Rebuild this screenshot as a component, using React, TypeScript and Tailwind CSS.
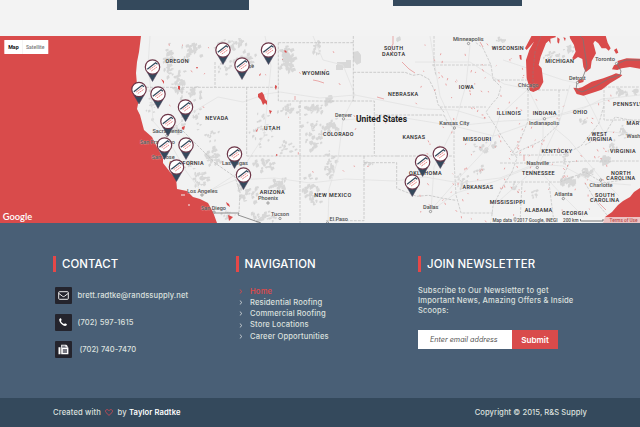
import { ReactNode } from "react";

type Label = [text: string, x: number, y: number, width: number];

const STATES: Label[] = [
  ["OREGON", 165.5, 63, 23], ["WYOMING", 302, 74.5, 27.5], ["SOUTH", 384, 50.3, 19], ["DAKOTA", 382, 55.6, 23],
  ["NEBRASKA", 388, 96.2, 30], ["NEVADA", 205.2, 120.2, 23], ["UTAH", 264, 130, 16], ["COLORADO", 323, 135.8, 30.5],
  ["KANSAS", 402.5, 138.5, 22.5], ["WISCONSIN", 491.7, 50, 32], ["MICHIGAN", 545.3, 63, 28.5], ["IOWA", 458.7, 89.3, 15],
  ["ILLINOIS", 496.7, 114.5, 24], ["INDIANA", 532.7, 114.5, 23.7], ["OHIO", 573, 113.6, 14.3], ["PENNSYLVANIA", 613, 105.7, 44],
  ["MARYLAND", 626.5, 124.5, 32], ["MISSOURI", 463, 140.8, 28], ["KENTUCKY", 541.5, 153, 30.5], ["TENNESSEE", 522, 175.4, 32.7],
  ["WEST", 591.5, 135.6, 15.5], ["VIRGINIA", 587, 140.7, 25], ["VIRGINIA", 610, 153, 25.5], ["NORTH", 611, 174.6, 19.5],
  ["CAROLINA", 606.3, 179.5, 28.7], ["SOUTH", 595, 196.6, 19.5], ["CAROLINA", 590, 201.6, 29], ["ARKANSAS", 462.5, 188.5, 30.5],
  ["MISSISSIPPI", 489.7, 204, 35], ["ALABAMA", 524.7, 211.8, 27.5], ["GEORGIA", 562, 215.4, 25.5], ["OKLAHOMA", 409, 175.3, 32.5],
  ["NEW MEXICO", 314.3, 196.5, 37], ["ARIZONA", 259.7, 193.6, 25], ["CALIFORNIA", 169.5, 165, 34],
];

const CITIES: Label[] = [
  ["Minneapolis", 453, 41.2, 30.5], ["Chicago", 518, 86.6, 20.5], ["Detroit", 569, 80, 16.5], ["Toronto", 595, 60.7, 20],
  ["Denver", 335, 116.5, 17], ["Kansas City", 439.3, 125.3, 30], ["Indianapolis", 529, 125.3, 30], ["Nashville", 526.5, 165, 22.5],
  ["Charlotte", 589.5, 186.8, 23], ["Atlanta", 554.5, 196.2, 18], ["Dallas", 423, 208.8, 15.5], ["El Paso", 329.5, 221.4, 18.5],
  ["Tucson", 271, 216, 18], ["Phoenix", 258, 200.4, 20], ["Las Vegas", 222, 165, 26], ["Los Angeles", 187, 192.5, 30.5],
  ["San Diego", 201, 210, 25], ["San Jose", 151.7, 158.6, 23], ["San Francisco", 140, 143.7, 35], ["Sacramento", 152.5, 132.5, 30],
  ["Washington", 626.5, 137.7, 30], ["Boise", 241, 67.5, 13],
];

const DOTS = [
  [468.5, 43.5], [528.5, 89], [577.5, 82.5], [616.5, 63.5], [343.5, 118.8], [454.4, 128], [544.5, 118.7], [537.3, 167.5],
  [600.7, 180], [563.3, 198.6], [430.5, 211.5], [327.5, 223], [280, 218.5], [268, 203], [202, 195], [214, 212], [167, 135.5], [252.3, 65.7],
];

const PINS = [
  [152.5, 67], [139, 89.5], [158, 94], [185.5, 107], [168, 121.5], [186, 145], [164.5, 145], [176.5, 167],
  [223, 50], [242, 65], [268.5, 50], [234.5, 154], [243.5, 175], [440.3, 154], [422.6, 162], [412.3, 182],
];

// Terrain clusters: centre x, centre y, half width, half height, patch count, patch size.
const TERRAIN = [
  [167, 60, 5, 22, 26, 4], [191, 51, 12, 11, 16, 4], [177, 80, 8, 14, 22, 4], [191, 92, 11, 9, 14, 4], [150, 106, 5, 20, 12, 3],
  [232, 43, 20, 6, 34, 3], [242, 60, 14, 12, 22, 4], [225, 68, 8, 8, 8, 4], [285, 58, 8, 14, 34, 5], [316, 47, 6, 7, 9, 4],
  [356, 59, 3, 6, 6, 4], [326, 99, 6, 5, 9, 4], [287, 108, 13, 5, 14, 4], [312, 109, 12, 6, 16, 4],
  [211, 132, 10, 10, 8, 3], [211, 157, 9, 11, 22, 4], [200, 178, 10, 10, 18, 4], [262, 130, 16, 20, 22, 3], [285, 148, 10, 12, 12, 3],
  [312, 133, 12, 20, 24, 4], [330, 125, 9, 10, 16, 4], [329, 162, 7, 17, 18, 4], [310, 190, 10, 20, 24, 4], [263, 163, 12, 8, 16, 4],
  [277, 184, 9, 7, 20, 4], [247, 193, 14, 10, 18, 4], [263, 216, 13, 6, 18, 4], [228, 215, 8, 6, 8, 3], [188, 163, 6, 6, 8, 3],
  [176, 128, 8, 8, 12, 3], [196, 119, 5, 15, 9, 3], [550, 56, 14, 7, 16, 3], [568, 49, 6, 5, 9, 3], [500, 39, 7, 3, 7, 3],
  [620, 92, 6, 4, 9, 4], [634, 91, 4, 4, 8, 3], [583, 121, 7, 4, 8, 3], [480, 148, 9, 7, 9, 4], [493, 145, 3, 4, 6, 4],
  [461, 180, 7, 9, 14, 3], [477, 169, 7, 5, 8, 3], [568, 181, 9, 5, 24, 4], [585, 172, 10, 5, 18, 4], [603, 160, 7, 6, 14, 4],
  [612, 146, 5, 8, 12, 3], [622, 132, 5, 8, 12, 3], [565, 157, 4, 7, 8, 3], [513, 187, 5, 7, 6, 3], [533, 193, 4, 5, 6, 3],
  [368, 163, 5, 2, 8, 3], [398, 38, 4, 2, 4, 4],
];

function seeded(seed: number) {
  let s = seed;
  return () => {
    s = (s * 16807) % 2147483647;
    return s / 2147483647;
  };
}

function patches() {
  const rnd = seeded(4217);
  return TERRAIN.map(([cx, cy, w, h, n, size]) => {
    let d = "";
    for (let i = 0; i < n * 1.5; i++) {
      const x = cx + (rnd() + rnd() - 1) * w;
      const y = cy + (rnd() + rnd() - 1) * h;
      const a = size * (0.3 + rnd() * 0.5);
      const b = size * (0.25 + rnd() * 0.5);
      d += `M${x.toFixed(1)} ${y.toFixed(1)}l${a.toFixed(1)} ${(-b * 0.3).toFixed(1)}l${(a * 0.3).toFixed(1)} ${b.toFixed(1)}l${(-a * 0.5).toFixed(1)} ${(b * 0.2).toFixed(1)}l${(-a * 0.4).toFixed(1)} ${(b * 0.5).toFixed(1)}l${(-a * 0.5).toFixed(1)} ${(-b * 0.6).toFixed(1)}z`;
    }
    return d;
  }).join("");
}

function lakes() {
  const rnd = seeded(991);
  let d = "";
  const areas = [[415, 38, 110, 184, 105], [515, 95, 100, 120, 55], [250, 40, 150, 170, 14], [150, 40, 70, 90, 10]];
  areas.forEach(([x0, y0, w, h, n]) => {
    for (let i = 0; i < n; i++) {
      const x = x0 + rnd() * w;
      const y = y0 + rnd() * h;
      d += `M${x.toFixed(1)} ${y.toFixed(1)}l${(rnd() * 1.6 - 0.6).toFixed(1)} ${(rnd() * 1.6).toFixed(1)}`;
    }
  });
  return d;
}

const HALO = { paintOrder: "stroke" as const };

function UsMap() {
  return (
    <svg className="block h-[187px] w-full" viewBox="0 36 640 187" fontFamily="Roboto, Arial, sans-serif">
      <rect y="36" width="640" height="187" fill="#f2f2f2" />
      <path d={patches()} fill="#d7d7d7" />
      <path d="M337 62h9v-2h5v8h-8v2h-7v-5h1zM353 52l5-1 3 4v7l-4 3-4-5z" fill="#d8d8d8" />
      <g fill="none" stroke="#e2e2e2" strokeWidth="0.8">
        <path d="M150 36l-2 30 3 25 2 30 13 15 20 35 18 24M168 135l20-20 30-18 25 5 23-8 14-2 40 6 35-3 30 6 40 8 30 1 30 9M265 36l6 30-3 30-4 40-23 35-38 24M200 195l35-15 40-2 35 5 35-4 50 2 30-4 35 6 40-5 35-14 28 2 30 16 38 3M313 36l10 24 20 5 12 30-12 24-5 40-9 30-1 34M415 62l55 0 34 22 24 5 15 30 0 20-7 28 28 30 20 20M470 45l-4 40-12 42-20 40-3 44 25-18 40-12 40-16M430 36l10 60 14 30 50-5 40-2 34-8 24-12 38-4M343 120l50-4 61 10 40 10 40-14 40-12 40-12M503 60l60 20 14 3 14 24 12 24 37 4M528 89l-28 26-10 30-30 32-30 34M570 85l-10 35-22 46-40 36M545 120l24 20 30 36 20 20"/>
      </g>
      <g fill="none" stroke="#c6c6c6" strokeWidth="0.9" strokeDasharray="2.8 1.2">
        <path d="M142 87.3H278.3M215 62V87.3M246.7 87.3V156M246.7 156H397M278.3 42.7H353.3V101H278.3zM353.3 36V42.7M353.3 72.3H405l8 3 7-1 9 5 6 12 3 13 6 8M353.3 101H374.3V115H444M374.3 115V156M300 101V223M364 156V220.7H326M364 162.7H396.7V188.3l10 4 10 4 12-1 14 3 13 2M397 156H453.5M182 87.3V130l33 33 20 14 5 15-1 20" />
        <path d="M434 36v30l2 10M432 65h59l-8-17-8-6M491 65l2 14 8 8-3 10-7 8-5 7 8 12 10 16 9 12 4 6-5 14-9 14-10 20-3 25M440 107h46M444 115l4 8 6 5v32l2 35 5 18h32M493 80h35M528 90v31l-8 20-9 14M530 90h38M559 90v34l-18 17-26 12M511 155h52l18-9 12-15 6-8 5-18M604 82v38h36M604 87h36M500 163h37l47-2h56M505 182h55l10-20M522 183l-2 40M549 183l5 40M560 182l25-10 18 11 20-3M585 183l12 20 10 12M585 145l20-11 10-17 20 4" strokeWidth="0.8" />
      </g>
      <g fill="#d94b4b">
        <path d="M0 36H141L139 52L137 62L136 73L137 85L139 95L138 104L137 109L140 115L144 130L152 137L157 147L163 158L163 163L170 172L176 178L177 189L187 191L193 197L200 199L208 203L213 212L217 223H0Z" />
        <g transform="translate(410 0) scale(.33333)">
          <path d="M365 107L345 145L350 150L372 125L358 150L348 180L350 235L357 258L360 272L370 276L388 268L400 246L395 205L386 195L392 170L400 150L408 130L416 122L422 132L421 116L437 112V107Z" />
          <path d="M479 107H587L593 128L602 145L596 152L588 145L575 145L565 130L555 122L550 130L558 160L545 183L542 205L527 217L520 200L517 177L504 171L490 181L487 174L497 155L492 135L480 115Z" />
          <path d="M490 263L505 265L516 262L545 245L580 235L606 225L618 220L637 225L630 232L600 250L575 269L555 276L520 287L500 282ZM499 249l8-12 15 1-2 8-13 4zM606 208L612 196L625 190L622 183L650 175L690 176V206L660 201L635 205L622 210ZM612 150l8-5 5 13-7 3zM328 165l6 0 1 15-5-2zM460 112l7 2-2 10zM442 112l7 5-2 14-5-4z" />
        </g>
        <path d="M640 188L634 192L630 197L623 201L618 205L612 212L605 217L603 223H640Z" />
        <path d="M258 94l4-2 2 3 1 4 2 2v4l-2-2-2 2-2-5-3-3zM269 110l3 1-2 3zM256 131l2-3-1 4zM275 85l2 1-1 4-1-2zM259 75l2-2-1 3zM284.5 50l2 1v2l-2-1zM282 59l1 1h-1zM161 79l3 2v3zM178 86l2 0v4l-2-1zM182 127l3-1-1 4-2-1zM196 67l2 0-1 2zM276 154l2 1-2 1zM226 202l3 2 1 3-3-2zM228 215l5 2-2 2-2 2z" />
      </g>
      <path d={lakes()} fill="none" stroke="#e58a8a" strokeWidth="0.75" strokeLinecap="round" />
      <path d="M393 36v8l-3 5 4 4M402 62l7 7 6 4M313 80l5 1 6 2M377 97l7 2M524 155v6M599 203l7 7M480 42l3 5M295 96v4" fill="none" stroke="#e58a8a" strokeWidth="0.7" />
      <path d="M181 195l4 0M188 205l2 0" stroke="#f2f2f2" strokeWidth="1" />
      <g fill="none" stroke="#777" strokeWidth="0.8">
        <path d="M214 213h25l-1 2 23 8M580 36l3 3 2 14 2 13-4 11-6 6-1 6 6 3 14-6 14-8 10-3 1-4-4-7 9-4h15" />
        <path d="M541 36l-6 16-2 20 0 18" stroke="#a96868" strokeDasharray="3 1" />
      </g>
      <g fill="#f5f5f5" stroke="#777" strokeWidth="0.7">
        {DOTS.map(([x, y]) => <circle key={`${x}-${y}`} cx={x} cy={y} r="1.15" />)}
      </g>
      <g fontSize="5.45" fontWeight="500" fill="#262626" stroke="#f2f2f2" strokeWidth="0.5" strokeOpacity="0.6" style={HALO}>
        {STATES.map(([t, x, y, w]) => <text key={`${t}${x}`} x={x} y={y} textLength={w}>{t}</text>)}
      </g>
      <g fontSize="6.2" fill="#505050" stroke="#f2f2f2" strokeWidth="0.5" strokeOpacity="0.6" style={HALO}>
        {CITIES.map(([t, x, y, w]) => <text key={t} x={x} y={y} textLength={w} lengthAdjust="spacingAndGlyphs">{t}</text>)}
      </g>
      <text x="356" y="121.8" fontSize="8.8" fontWeight="700" fill="#1a1a1a" textLength="51" lengthAdjust="spacingAndGlyphs">United States</text>
      {PINS.map(([x, y]) => (
        <g key={`${x}-${y}`} transform={`translate(${x} ${y})`}>
          <path d="M-5.2 5.5L0 14.5L5.2 5.5Z" fill="#34495c" stroke="#54405a" strokeWidth="0.5" />
          <circle r="7.2" fill="#fff" stroke="#6c3547" strokeWidth="1.2" />
          <path d="M-5.2 2.2L3.1-4.2L5 -2.8" fill="none" stroke="#34495c" strokeWidth="1.3" />
          <path d="M-2.8 2.6L3.6-2M-1.2 4L4.5 0" fill="none" stroke="#e47777" strokeWidth="0.9" strokeDasharray="2 .5" />
        </g>
      ))}
      <rect x="491" y="217" width="149" height="6" fill="#f5f5f5" opacity="0.7" />
      <g fontSize="5.2" fill="#4c4c4c">
        <text x="492.5" y="221.6" textLength="65" lengthAdjust="spacingAndGlyphs">Map data ©2017 Google, INEGI</text>
        <text x="563" y="221.6" textLength="15.5" lengthAdjust="spacingAndGlyphs">200 km</text>
        <text x="609.5" y="221.6" textLength="28" lengthAdjust="spacingAndGlyphs" fill="#b84b4b">Terms of Use</text>
      </g>
      <path d="M580.5 219v2h22.5v-2" fill="none" stroke="#555" strokeWidth="0.8" />
      <text x="2.7" y="219.9" fontFamily="Lato, sans-serif" fontSize="10" fontWeight="600" fill="#fff" textLength="29.5" lengthAdjust="spacingAndGlyphs">Google</text>
      <rect x="4.3" y="40" width="44" height="14" rx="0.6" fill="#fff" />
      <path d="M22.5 40v14" stroke="#ececec" strokeWidth="0.6" />
      <text x="8.2" y="49.2" fontSize="5.7" fontWeight="700" fill="#111" textLength="10.5" lengthAdjust="spacingAndGlyphs">Map</text>
      <text x="26" y="49.2" fontSize="5.8" fill="#777" textLength="18.5" lengthAdjust="spacingAndGlyphs">Satellite</text>
    </svg>
  );
}

function Heading({ children }: { children: ReactNode }) {
  return (
    <h2 className="flex h-4 items-center border-l-3 border-[#e54848] pt-px pl-[6px] text-[11.4px] font-medium tracking-[0.1px] whitespace-nowrap text-white">
      {children}
    </h2>
  );
}

function ContactRow({ icon, children }: { icon: ReactNode; children: ReactNode }) {
  return (
    <div className="flex h-[17px] items-center whitespace-nowrap">
      <span className="mr-[6px] flex size-[17px] items-center justify-center rounded-[1px] bg-[#24242d]">{icon}</span>
      <span className="pt-[1.5px]">{children}</span>
    </div>
  );
}

const LINKS = ["Home", "Residential Roofing", "Commercial Roofing", "Store Locations", "Career Opportunities"];

export default function App() {
  return (
    <div className="h-[427px] w-[640px] overflow-hidden bg-[#f3f3f3] font-['Inter',sans-serif] text-[7.6px] font-medium text-[#dce0df]">
      <div className="flex h-9 items-start pl-[117px]">
        <div className="h-[9.5px] w-[132px] bg-[#34495c]" />
        <div className="ml-[143.5px] h-[6px] w-[129px] bg-[#34495c]" />
      </div>
      <UsMap />
      <footer>
        <div className="flex h-[175px] bg-[#495f76] pt-[33px] pl-[53px]">
          <section className="w-[182.5px]">
            <Heading>CONTACT</Heading>
            <div className="mt-[14.5px] flex flex-col gap-[10px] pl-[1.5px]">
              <ContactRow icon={
                <svg className="h-[9px] w-[11px]" viewBox="0 0 11 9" fill="none" stroke="#fff" strokeWidth="0.9">
                  <rect x="0.7" y="0.7" width="9.6" height="7.6" rx="0.8" />
                  <path d="M0.8 2.4L4.6 5.3Q5.5 5.9 6.4 5.3L10.2 2.4" />
                </svg>
              }><span className="tracking-[0.08px]">brett.radtke@randssupply.net</span></ContactRow>
              <ContactRow icon={
                <svg className="size-[8px]" viewBox="0 0 8 8" fill="#fff">
                  <path d="M.2 1.5C.3.8 1.3.1 1.7.2c.4.1.9 1.6 1 1.8 0 .4-.8.7-.8 1 0 .6 2 2.8 3 3.1.4.1.7-.8 1.1-.8.3 0 1.8.8 1.9 1.1.1.7-1 1.5-1.8 1.5C3.6 7.9.1 4.3.2 1.5Z" />
                </svg>
              }><span className="tracking-[0.12px]">(702) 597-1615</span></ContactRow>
              <ContactRow icon={
                <svg className="size-[11px]" viewBox="0 0 11 11">
                  <path d="M.5 3.3h2v7h-2zM3.2.7h5L9.6 2v1.5h.8v6.8H3.2z" fill="#fff" />
                  <path d="M4.1 1.5h3.3v1.2h1.3v1H4.1zM4.8 5h4.2v4H4.8z" fill="#777882" />
                </svg>
              }><span className="pl-[2px]">(702) 740-7470</span></ContactRow>
            </div>
          </section>
          <section className="w-[182.5px]">
            <Heading>NAVIGATION</Heading>
            <ul className="mt-[14px] pl-[3.5px]">
              {LINKS.map((name) => (
                <li key={name} className="flex h-[11.2px] items-center whitespace-nowrap">
                  <svg className="mr-[7px] h-[5px] w-[4px]" viewBox="0 0 4 5" fill="none" stroke={name === "Home" ? "#e54848" : "#d0d6d9"} strokeWidth="0.9">
                    <path d="M.8.5L2.9 2.5L.8 4.5" />
                  </svg>
                  <a className={name === "Home" ? "tracking-[0.2px] text-[#e54848]" : "tracking-[0.13px]"}>{name}</a>
                </li>
              ))}
            </ul>
          </section>
          <section>
            <Heading>JOIN NEWSLETTER</Heading>
            <p className="mt-[13.5px] leading-[10.4px] tracking-[0.16px] whitespace-nowrap">
              Subscribe to Our Newsletter to get<br />Important News, Amazing Offers &amp; Inside<br />Scoops:
            </p>
            <form className="mt-[13.7px] flex h-[19px] w-[140px]">
              <div className="flex w-[94px] items-center bg-white pl-[12px] text-[7.2px] font-normal text-[#555] italic">Enter email address</div>
              <button type="button" className="flex-1 bg-[#d94b4b] text-[8.1px] font-semibold text-white">Submit</button>
            </form>
          </section>
        </div>
        <div className="flex h-[29px] items-center justify-between bg-[#34495c] pr-[53px] pl-[53px]">
          <div className="flex items-center whitespace-nowrap">
            <span className="tracking-[0.15px]">Created with</span>
            <svg className="mr-[4.5px] ml-[4px] h-[7px] w-[8px]" viewBox="0 0 8 7" fill="none" stroke="#d94b57" strokeWidth="0.8">
              <path d="M4 6.4L1 3.5C-.2 2 .8.6 2.2.6C3.1.6 3.6 1.1 4 1.7C4.4 1.1 4.9.6 5.8.6C7.2.6 8.2 2 7 3.5Z" />
            </svg>
            <span>by</span><strong className="ml-[2.5px] font-semibold tracking-[0.1px] text-white">Taylor Radtke</strong>
          </div>
          <div className="tracking-[0.07px] whitespace-nowrap">Copyright © 2015, R&amp;S Supply</div>
        </div>
      </footer>
    </div>
  );
}
